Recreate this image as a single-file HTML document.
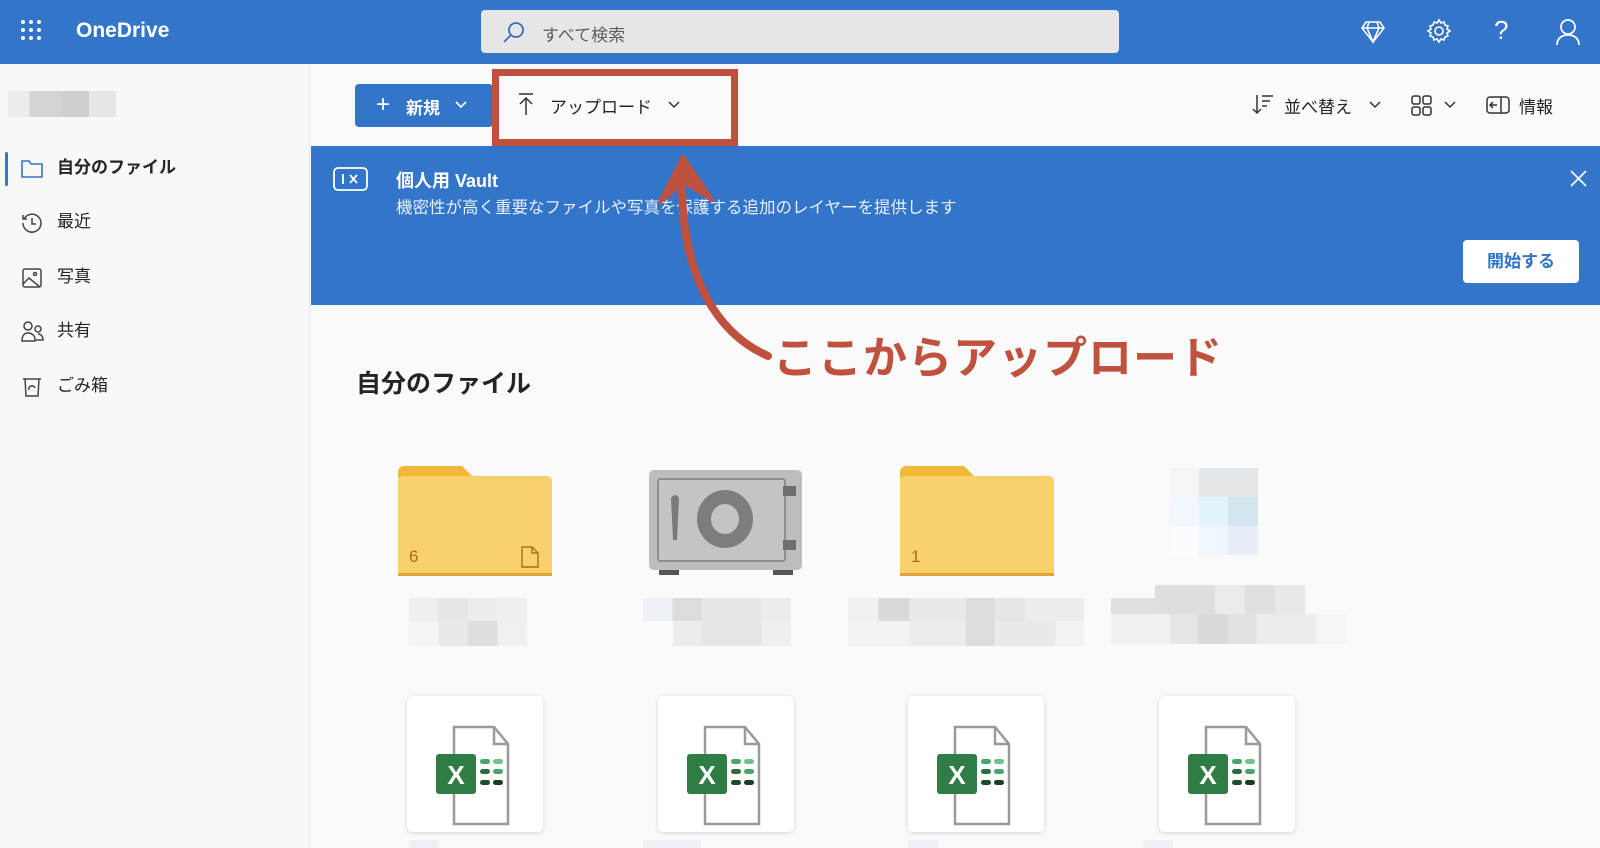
<!DOCTYPE html>
<html><head><meta charset="utf-8"><style>
*{margin:0;padding:0;box-sizing:border-box}
body{width:1600px;height:848px;overflow:hidden;background:#fafafa;font-family:"Liberation Sans","Noto Sans CJK JP",sans-serif;position:relative;color:#252423}
.a{position:absolute}
.hdr{left:0;top:0;width:1600px;height:64px;background:#3275c9}
.side{left:0;top:64px;width:310px;height:784px;background:#f8f8f8;border-right:1px solid #e8e8e8}
.nav{left:57px;font-size:17px;color:#252423;line-height:20px}
.pix{position:absolute}
</style></head><body>
<div class="a hdr"></div>
<svg class="a" style="left:20px;top:19px" width="22" height="22" fill="#fff"><circle cx="3" cy="3" r="2"/><circle cx="11" cy="3" r="2"/><circle cx="19" cy="3" r="2"/><circle cx="3" cy="11" r="2"/><circle cx="11" cy="11" r="2"/><circle cx="19" cy="11" r="2"/><circle cx="3" cy="19" r="2"/><circle cx="11" cy="19" r="2"/><circle cx="19" cy="19" r="2"/></svg>
<div class="a" style="left:76px;top:19px;color:#fff;font-size:21px;font-weight:bold">OneDrive</div>
<div class="a" style="left:481px;top:10px;width:638px;height:43px;background:#e6e6e6;border-radius:4px"></div>
<svg class="a" style="left:502px;top:21px" width="24" height="24" fill="none" stroke="#3a6fb5" stroke-width="1.8"><circle cx="14" cy="9" r="7"/><path d="M9 14 2 21"/></svg>
<div class="a" style="left:542px;top:21px;font-size:17px;color:#605e5c">すべて検索</div>
<svg class="a" style="left:1360px;top:20px" width="26" height="24" fill="none" stroke="#fff" stroke-width="1.6"><path d="M6 2h14l4 6-11 14L2 8z M2 8h22 M9 2l-2 6 6 14 6-14-2-6"/></svg>
<svg class="a" style="left:1426px;top:18px" width="26" height="26" fill="none" stroke="#fff" stroke-width="1.6"><circle cx="13" cy="13" r="4"/><path d="M13 2l2 3 3-1 1 3 3 1-1 3 3 2-3 2 1 3-3 1-1 3-3-1-2 3-2-3-3 1-1-3-3-1 1-3-3-2 3-2-1-3 3-1 1-3 3 1z"/></svg>
<div class="a" style="left:1494px;top:15px;color:#fff;font-size:26px;font-weight:300">?</div>
<svg class="a" style="left:1555px;top:18px" width="26" height="28" fill="none" stroke="#fff" stroke-width="1.8"><circle cx="13" cy="9" r="7"/><path d="M2 27c0-7 5-10 11-10s11 3 11 10"/></svg>

<div class="a side"></div>
<div class="a" style="left:8px;top:91px;width:108px;height:26px;background:linear-gradient(90deg,#ebebeb 0 20%,#d4d4d4 20% 50%,#cfcfcf 50% 75%,#e6e6e6 75%)"></div>
<div class="a" style="left:5px;top:152px;width:3px;height:34px;background:#3275c9;border-radius:2px"></div>
<svg class="a" style="left:21px;top:158px" width="22" height="20" fill="none" stroke="#3275c9" stroke-width="1.6"><path d="M1 3h7l2 3h11v13H1z"/></svg>
<div class="a nav" style="top:158px;font-weight:bold">自分のファイル</div>
<svg class="a" style="left:21px;top:212px" width="22" height="22" fill="none" stroke="#444" stroke-width="1.5"><path d="M3 7A9 9 0 1 1 2 11 M2 3v4h4 M11 6v6h4"/></svg>
<div class="a nav" style="top:212px">最近</div>
<svg class="a" style="left:21px;top:267px" width="22" height="22" fill="none" stroke="#444" stroke-width="1.5"><rect x="2" y="2" width="18" height="18" rx="2"/><circle cx="14" cy="7" r="1.5"/><path d="M2 17l6-6 11 9"/></svg>
<div class="a nav" style="top:267px">写真</div>
<svg class="a" style="left:21px;top:321px" width="24" height="22" fill="none" stroke="#444" stroke-width="1.5"><circle cx="7" cy="5" r="4"/><circle cx="17" cy="8" r="3"/><path d="M1 20c0-6 3-8 6-8s7 2 7 6v2z M15 19h7c0-4-2-6-5-6"/></svg>
<div class="a nav" style="top:321px">共有</div>
<svg class="a" style="left:22px;top:376px" width="20" height="22" fill="none" stroke="#444" stroke-width="1.5"><path d="M1 3h18 M3 3l1 17h12l1-17 M7 14a3 3 0 0 1 6-2"/></svg>
<div class="a nav" style="top:376px">ごみ箱</div>

<div class="a" style="left:355px;top:84px;width:138px;height:43px;background:#3275c9;border-radius:4px"></div>
<div class="a" style="left:376px;top:91px;color:#fff;font-size:24px;font-weight:300">+</div>
<div class="a" style="left:406px;top:94px;color:#fff;font-size:17px;font-weight:bold">新規</div>
<svg class="a" style="left:455px;top:101px" width="12" height="8" fill="none" stroke="#fff" stroke-width="1.6"><path d="M1 1l5 5 5-5"/></svg>

<svg class="a" style="left:518px;top:92px" width="16" height="24" fill="none" stroke="#333" stroke-width="1.5"><path d="M1 2h14 M8 23V6 M2 12l6-6 6 6"/></svg>
<div class="a" style="left:550px;top:93px;font-size:17px;color:#252423">アップロード</div>
<svg class="a" style="left:668px;top:101px" width="12" height="8" fill="none" stroke="#333" stroke-width="1.5"><path d="M1 1l5 5 5-5"/></svg>
<div class="a" style="left:492px;top:69px;width:246px;height:77px;border:7px solid #c0513f"></div>

<svg class="a" style="left:1252px;top:93px" width="22" height="22" fill="none" stroke="#333" stroke-width="1.5"><path d="M5 2v18 M1 16l4 4 4-4 M10 3h11 M10 8h8 M10 13h5"/></svg>
<div class="a" style="left:1284px;top:93px;font-size:17px">並べ替え</div>
<svg class="a" style="left:1369px;top:101px" width="12" height="8" fill="none" stroke="#333" stroke-width="1.5"><path d="M1 1l5 5 5-5"/></svg>
<svg class="a" style="left:1411px;top:95px" width="21" height="21" fill="none" stroke="#333" stroke-width="1.5"><rect x="1" y="1" width="8" height="8" rx="2"/><rect x="12" y="1" width="8" height="8" rx="2"/><rect x="1" y="12" width="8" height="8" rx="2"/><rect x="12" y="12" width="8" height="8" rx="2"/></svg>
<svg class="a" style="left:1444px;top:101px" width="12" height="8" fill="none" stroke="#333" stroke-width="1.5"><path d="M1 1l5 5 5-5"/></svg>
<svg class="a" style="left:1486px;top:96px" width="24" height="18" fill="none" stroke="#333" stroke-width="1.5"><rect x="1" y="1" width="22" height="16" rx="3"/><path d="M15 1v16 M11 9H4 M7 6 4 9l3 3"/></svg>
<div class="a" style="left:1519px;top:93px;font-size:17px">情報</div>

<div class="a" style="left:311px;top:146px;width:1289px;height:159px;background:#3275c9"></div>
<svg class="a" style="left:333px;top:167px" width="35" height="24" fill="none" stroke="#fff" stroke-width="1.8"><rect x="1" y="1" width="33" height="22" rx="4"/><path d="M10 7v10 M17 8l7 8 M24 8l-7 8"/></svg>
<div class="a" style="left:396px;top:167px;color:#fff;font-size:18px;font-weight:bold">個人用 Vault</div>
<div class="a" style="left:396px;top:194px;color:#e8f0fb;font-size:16.5px">機密性が高く重要なファイルや写真を保護する追加のレイヤーを提供します</div>
<svg class="a" style="left:1570px;top:170px" width="17" height="17" fill="none" stroke="#fff" stroke-width="1.6"><path d="M1 1l15 15 M16 1 1 16"/></svg>
<div class="a" style="left:1463px;top:240px;width:116px;height:43px;background:#fff;border-radius:4px;color:#3275c9;font-size:17px;font-weight:bold;text-align:center;line-height:43px">開始する</div>

<div class="a" style="left:356px;top:364px;font-size:25px;color:#252423;font-weight:600">自分のファイル</div>

<svg class="a" style="left:640px;top:150px" width="140" height="215" fill="none"><path d="M128 206C80 185 40 130 42 25" stroke="#c0513f" stroke-width="8" stroke-linecap="round"/><path d="M20 52 43 7 72 50 44 32z" fill="#c0513f" stroke="#c0513f" stroke-width="4" stroke-linejoin="round"/></svg>
<div class="a" style="left:773px;top:322px;font-size:44px;font-weight:bold;color:#c0513f;letter-spacing:1px">ここからアップロード</div>

<svg class="a" style="left:398px;top:466px" width="156" height="112"><path d="M0 6a6 6 0 0 1 6-6h58l12 12H0z" fill="#f2b83b"/><rect x="0" y="10" width="154" height="100" rx="5" fill="#f8d06c"/><rect x="0" y="107" width="154" height="3" fill="#e0a43a"/></svg>
<div class="a" style="left:409px;top:547px;font-size:17px;color:#b06c10">6</div>
<svg class="a" style="left:521px;top:546px" width="18" height="22" fill="none" stroke="#b06c10" stroke-width="1.4"><path d="M1 1h10l6 6v14H1z M11 1v6h6"/></svg>
<svg class="a" style="left:649px;top:470px" width="154" height="110"><rect x="0" y="0" width="153" height="100" rx="5" fill="#bdbdbd"/><rect x="9" y="9" width="127" height="82" rx="2" fill="#c4c4c4" stroke="#8e8e8e" stroke-width="2"/><path d="M22 28q4-6 8 0l-2 42h-4z" fill="#7a7a7a"/><ellipse cx="76" cy="49" rx="28" ry="29" fill="#7d7d7d"/><ellipse cx="76" cy="49" rx="14" ry="15" fill="#c4c4c4"/><rect x="134" y="16" width="13" height="10" fill="#6e6e6e"/><rect x="134" y="70" width="13" height="10" fill="#6e6e6e"/><rect x="10" y="100" width="20" height="5" fill="#555"/><rect x="124" y="100" width="20" height="5" fill="#555"/></svg>
<svg class="a" style="left:900px;top:466px" width="156" height="112"><path d="M0 6a6 6 0 0 1 6-6h58l12 12H0z" fill="#f2b83b"/><rect x="0" y="10" width="154" height="100" rx="5" fill="#f8d06c"/><rect x="0" y="107" width="154" height="3" fill="#e0a43a"/></svg>
<div class="a" style="left:911px;top:547px;font-size:17px;color:#b06c10">1</div>

<div class="pix" style="left:409px;top:598px;width:118px;height:23px;background:linear-gradient(90deg,#efefef 25%,#e6e6e6 25% 50%,#ededed 50% 75%,#efefef 75%)"></div>
<div class="pix" style="left:409px;top:621px;width:118px;height:25px;background:linear-gradient(90deg,#f4f4f4 25%,#e9e9e9 25% 50%,#dedede 50% 75%,#f0f0f0 75%)"></div>
<div class="pix" style="left:643px;top:598px;width:148px;height:23px;background:linear-gradient(90deg,#eef2f8 20%,#dcdcdc 20% 40%,#e6e6e6 40% 80%,#ececec 80%)"></div>
<div class="pix" style="left:673px;top:621px;width:118px;height:25px;background:linear-gradient(90deg,#ececec 25%,#e5e5e5 25% 75%,#efefef 75%)"></div>
<div class="pix" style="left:848px;top:598px;width:236px;height:23px;background:linear-gradient(90deg,#f0f0f0 13%,#d9d9d9 13% 26%,#e9e9e9 26% 50%,#dcdcdc 50% 62%,#e5e5e5 62% 75%,#ececec 75%)"></div>
<div class="pix" style="left:848px;top:621px;width:236px;height:25px;background:linear-gradient(90deg,#f3f3f3 26%,#ececec 26% 50%,#dcdcdc 50% 62%,#e9e9e9 62% 88%,#f3f3f3 88%)"></div>
<div class="pix" style="left:1170px;top:468px;width:88px;height:29px;background:linear-gradient(90deg,#f5f5f5 33%,#e4e7e9 33% 100%)"></div>
<div class="pix" style="left:1170px;top:497px;width:88px;height:29px;background:linear-gradient(90deg,#f1f8fd 33%,#e1f4fc 33% 66%,#d3e6f0 66%)"></div>
<div class="pix" style="left:1170px;top:526px;width:88px;height:29px;background:linear-gradient(90deg,#fafcfd 33%,#eef7fd 33% 66%,#e8eef9 66%)"></div>
<div class="pix" style="left:1155px;top:585px;width:150px;height:29px;background:linear-gradient(90deg,#dedede 0 40%,#ebebeb 40% 60%,#e0e0e0 60% 80%,#e8e8e8 80%)"></div>
<div class="pix" style="left:1111px;top:598px;width:44px;height:16px;background:#e0e0e0"></div>
<div class="pix" style="left:1111px;top:614px;width:235px;height:30px;background:linear-gradient(90deg,#f0f0f0 25%,#e6e6e6 25% 37%,#d9d9d9 37% 50%,#e2e2e2 50% 62%,#ececec 62% 87%,#f5f5f5 87%)"></div>

<svg width="0" height="0" style="position:absolute"><defs><g id="xl"><rect x="0" y="0" width="136" height="136" rx="5" fill="#fff"/><path d="M47 31h40l14 17v80H47z" fill="#fff" stroke="#9a9a9a" stroke-width="2.5"/><path d="M87 31v17h14" fill="none" stroke="#9a9a9a" stroke-width="2.5"/><rect x="29" y="58" width="40" height="40" rx="3" fill="#2f7d45"/><text x="49" y="88" font-family="Liberation Sans" font-weight="bold" font-size="26" fill="#fff" text-anchor="middle">X</text><rect x="73" y="63" width="10" height="5" rx="2.5" fill="#4aa56a"/><rect x="86" y="63" width="10" height="5" rx="2.5" fill="#6fc48e"/><rect x="73" y="73" width="10" height="5" rx="2.5" fill="#2c6d40"/><rect x="86" y="73" width="10" height="5" rx="2.5" fill="#4aa56a"/><rect x="73" y="84" width="10" height="5" rx="2.5" fill="#1e4a2c"/><rect x="86" y="84" width="10" height="5" rx="2.5" fill="#1a3d25"/></g></defs></svg>
<svg class="a" style="left:407px;top:696px;filter:drop-shadow(0 1px 2px rgba(0,0,0,.15))" width="140" height="140"><use href="#xl"/></svg>
<svg class="a" style="left:658px;top:696px;filter:drop-shadow(0 1px 2px rgba(0,0,0,.15))" width="140" height="140"><use href="#xl"/></svg>
<svg class="a" style="left:908px;top:696px;filter:drop-shadow(0 1px 2px rgba(0,0,0,.15))" width="140" height="140"><use href="#xl"/></svg>
<svg class="a" style="left:1159px;top:696px;filter:drop-shadow(0 1px 2px rgba(0,0,0,.15))" width="140" height="140"><use href="#xl"/></svg>
<div class="pix" style="left:409px;top:840px;width:30px;height:8px;background:#eef1f6"></div>
<div class="pix" style="left:643px;top:840px;width:58px;height:8px;background:#eef1f6"></div>
<div class="pix" style="left:908px;top:840px;width:30px;height:8px;background:#eef1f6"></div>
<div class="pix" style="left:1143px;top:840px;width:30px;height:8px;background:#eef1f6"></div>
</body></html>
